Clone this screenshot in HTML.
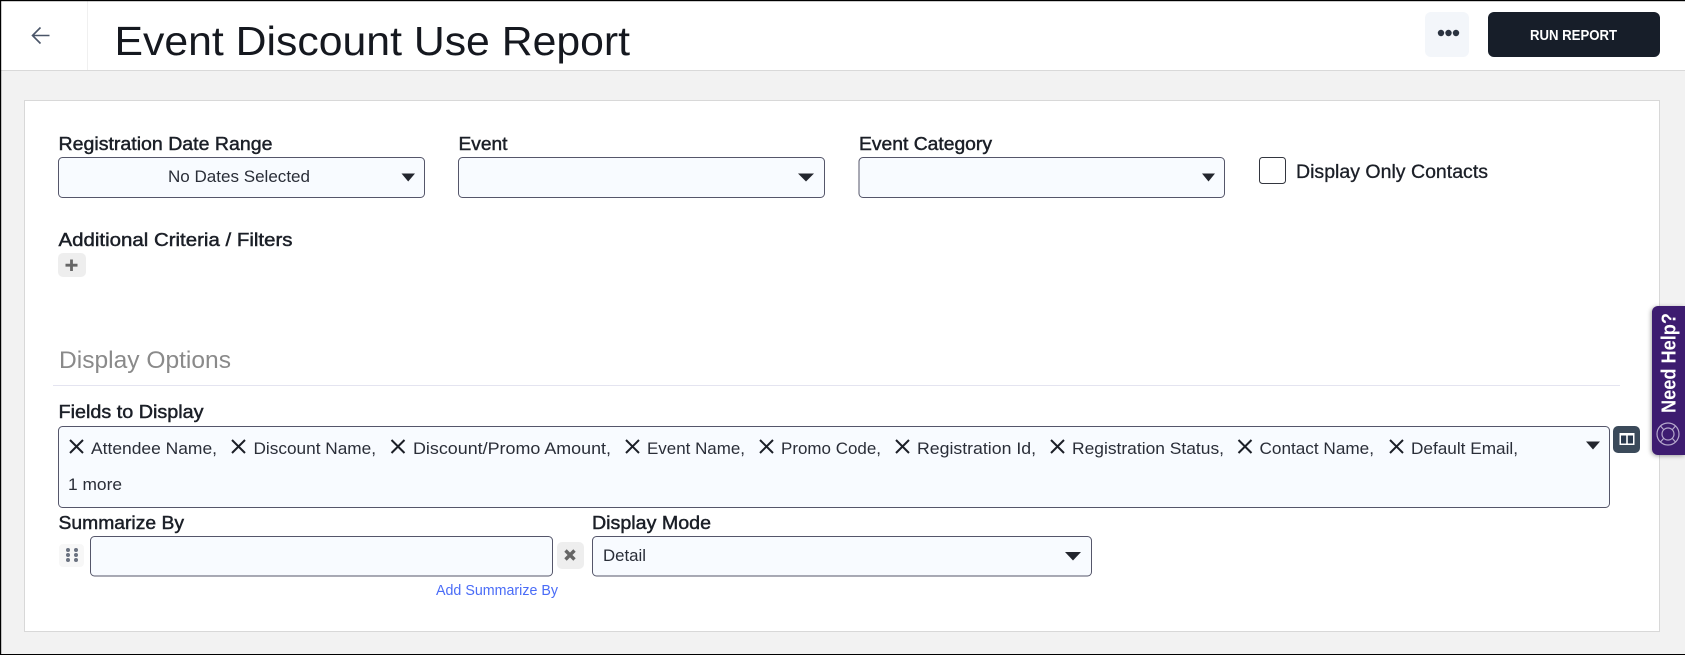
<!DOCTYPE html>
<html>
<head>
<meta charset="utf-8">
<title>Event Discount Use Report</title>
<style>
html,body{margin:0;padding:0;background:#f2f2f2}
svg{display:block}
text{font-family:"Liberation Sans",sans-serif}
.lab{font-size:18px;fill:#1b1f27;stroke:#1b1f27;stroke-width:.45}
.chip{font-size:17px;fill:#2a2e38}
.inp{fill:#f8fbff;stroke:#55566a;stroke-width:1}
.x{stroke:#1b1f27;stroke-width:2;fill:none}
</style>
</head>
<body>
<svg width="1685" height="655" viewBox="0 0 1685 655" xmlns="http://www.w3.org/2000/svg">
<defs>
<filter id="sh" x="-40%" y="-10%" width="160%" height="120%"><feDropShadow dx="-1" dy="1" stdDeviation="2" flood-color="#000" flood-opacity=".35"/></filter>
</defs>
<rect width="1685" height="655" fill="#f2f2f2"/>
<!-- header -->
<rect x="0" y="0" width="1685" height="70" fill="#fff"/>
<rect x="0" y="70" width="1685" height="1" fill="#d9d9d9"/>
<rect x="87" y="1" width="1" height="69" fill="#f0f0f0"/>
<path d="M49.5 35.5H33M40.5 27.5L32.5 35.5L40.5 43.5" fill="none" stroke="#4a5568" stroke-width="1.6"/>
<text x="114.500" y="55" font-size="41" fill="#15181f" textLength="515.500" lengthAdjust="spacingAndGlyphs">Event Discount Use Report</text>
<rect x="1425" y="12" width="44" height="45" rx="6" fill="#f3f6fa"/>
<circle cx="1441" cy="33" r="3.200" fill="#2b3340"/><circle cx="1448.500" cy="33" r="3.200" fill="#2b3340"/><circle cx="1456" cy="33" r="3.200" fill="#2b3340"/>
<rect x="1488" y="12" width="172" height="45" rx="6" fill="#171e29"/>
<text x="1530" y="40" font-size="15" font-weight="700" fill="#fff" textLength="87" lengthAdjust="spacingAndGlyphs">RUN REPORT</text>
<!-- card -->
<rect x="24.5" y="100.5" width="1635" height="531" fill="#fff" stroke="#d8d8d8"/>
<!-- row 1 -->
<text class="lab" x="58.5" y="150" textLength="214" lengthAdjust="spacingAndGlyphs">Registration Date Range</text>
<rect class="inp" x="58.5" y="157.5" width="366" height="40" rx="4"/>
<text class="chip" x="168" y="182" textLength="142" lengthAdjust="spacingAndGlyphs">No Dates Selected</text>
<path d="M401.500 173.500H415L408.200 181.500Z" fill="#23262e"/>
<text class="lab" x="458.5" y="150" textLength="49" lengthAdjust="spacingAndGlyphs">Event</text>
<rect class="inp" x="458.5" y="157.5" width="366" height="40" rx="4"/>
<path d="M798 173.500H814L806 181.500Z" fill="#23262e"/>
<text class="lab" x="859" y="150" textLength="133" lengthAdjust="spacingAndGlyphs">Event Category</text>
<rect class="inp" x="859" y="157.5" width="365.5" height="40" rx="4"/>
<path d="M1202 173.500H1215L1208.500 181.500Z" fill="#23262e"/>
<rect x="1259.500" y="157.500" width="26" height="26" rx="3" fill="#fff" stroke="#33363f" stroke-width="1"/>
<text x="1296" y="178" font-size="19" fill="#1b1f27" stroke="#1b1f27" stroke-width=".3" textLength="192" lengthAdjust="spacingAndGlyphs">Display Only Contacts</text>
<!-- filters -->
<text class="lab" x="58.5" y="246" textLength="234" lengthAdjust="spacingAndGlyphs">Additional Criteria / Filters</text>
<rect x="58" y="253" width="28" height="24" rx="5" fill="#eeeeee"/>
<path d="M71.500 259.500V271M65.500 265.200H77.500" stroke="#666" stroke-width="2.800" fill="none"/>
<!-- display options -->
<text x="59" y="368" font-size="24" fill="#8a8a8a" textLength="172" lengthAdjust="spacingAndGlyphs">Display Options</text>
<rect x="53" y="385" width="1567" height="1" fill="#e4e4f0"/>
<text class="lab" x="58.5" y="418" textLength="145" lengthAdjust="spacingAndGlyphs">Fields to Display</text>
<rect class="inp" x="58.500" y="426.500" width="1551" height="81" rx="4"/>
<path class="x" d="M70 440L83 453M83 440L70 453"/>
<text class="chip" x="91" y="454" textLength="126" lengthAdjust="spacingAndGlyphs">Attendee Name,</text>
<path class="x" d="M232 440L245 453M245 440L232 453"/>
<text class="chip" x="253.500" y="454" textLength="122.500" lengthAdjust="spacingAndGlyphs">Discount Name,</text>
<path class="x" d="M391.500 440L404.500 453M404.500 440L391.500 453"/>
<text class="chip" x="413" y="454" textLength="198" lengthAdjust="spacingAndGlyphs">Discount/Promo Amount,</text>
<path class="x" d="M626 440L639 453M639 440L626 453"/>
<text class="chip" x="647" y="454" textLength="98" lengthAdjust="spacingAndGlyphs">Event Name,</text>
<path class="x" d="M760 440L773 453M773 440L760 453"/>
<text class="chip" x="781" y="454" textLength="100" lengthAdjust="spacingAndGlyphs">Promo Code,</text>
<path class="x" d="M896 440L909 453M909 440L896 453"/>
<text class="chip" x="917" y="454" textLength="119" lengthAdjust="spacingAndGlyphs">Registration Id,</text>
<path class="x" d="M1051 440L1064 453M1064 440L1051 453"/>
<text class="chip" x="1072" y="454" textLength="152" lengthAdjust="spacingAndGlyphs">Registration Status,</text>
<path class="x" d="M1238.500 440L1251.500 453M1251.500 440L1238.500 453"/>
<text class="chip" x="1259.500" y="454" textLength="114.500" lengthAdjust="spacingAndGlyphs">Contact Name,</text>
<path class="x" d="M1390 440L1403 453M1403 440L1390 453"/>
<text class="chip" x="1411" y="454" textLength="107" lengthAdjust="spacingAndGlyphs">Default Email,</text>
<text class="chip" x="68" y="490" textLength="54" lengthAdjust="spacingAndGlyphs">1 more</text>
<path d="M1586 441.500H1600L1593 449.500Z" fill="#23262e"/>
<rect x="1613" y="426" width="27" height="27" rx="5" fill="#3b4a5a"/>
<rect x="1619.500" y="433" width="15" height="12" fill="#fff"/>
<rect x="1621" y="435.500" width="5.200" height="8" fill="#2a3a4e"/>
<rect x="1627.800" y="435.500" width="5.200" height="8" fill="#2a3a4e"/>
<!-- summarize -->
<text class="lab" x="58.5" y="529" textLength="125.500" lengthAdjust="spacingAndGlyphs">Summarize By</text>
<rect x="59" y="544" width="25" height="23" rx="4" fill="#f7f7f7"/>
<g fill="#6b7280"><circle cx="68" cy="550" r="2"/><circle cx="76" cy="550" r="2"/><circle cx="68" cy="555" r="2"/><circle cx="76" cy="555" r="2"/><circle cx="68" cy="560" r="2"/><circle cx="76" cy="560" r="2"/></g>
<rect class="inp" x="90.500" y="536.500" width="462" height="39.500" rx="4"/>
<rect x="557" y="542" width="27" height="27" rx="5" fill="#eeeeee"/>
<path d="M565.500 550.500L574.500 559.500M574.500 550.500L565.500 559.500" stroke="#666" stroke-width="3.400" fill="none"/>
<text x="436" y="595" font-size="15" fill="#4a6cf7" textLength="122" lengthAdjust="spacingAndGlyphs">Add Summarize By</text>
<text class="lab" x="592" y="529" textLength="119" lengthAdjust="spacingAndGlyphs">Display Mode</text>
<rect class="inp" x="592.500" y="536.500" width="499" height="39.500" rx="4"/>
<text class="chip" x="603" y="561" textLength="43" lengthAdjust="spacingAndGlyphs">Detail</text>
<path d="M1065 552H1081L1073 560.500Z" fill="#23262e"/>
<!-- need help tab -->
<path d="M1685 306H1658a6 6 0 0 0-6 6V449a6 6 0 0 0 6 6H1685Z" fill="#3d1a70" filter="url(#sh)"/>
<text transform="translate(1675.500 413) rotate(-90)" font-size="20" font-weight="700" fill="#fff" textLength="100" lengthAdjust="spacingAndGlyphs">Need Help?</text>
<g fill="none" stroke="#b5a8cc" stroke-width="1.200">
<circle cx="1668" cy="434" r="11"/>
<circle cx="1668" cy="434" r="6"/>
<path d="M1660.500 426L1664 430M1675.500 426L1672 430M1660.500 442L1664 438M1675.500 442L1672 438"/>
</g>
<!-- screenshot edge -->
<rect x="0" y="0" width="1685" height="1.200" fill="#000"/>
<rect x="0" y="0" width="1.200" height="655" fill="#000"/>
<rect x="0" y="654" width="1685" height="1" fill="#000"/>
</svg>
</body>
</html>
